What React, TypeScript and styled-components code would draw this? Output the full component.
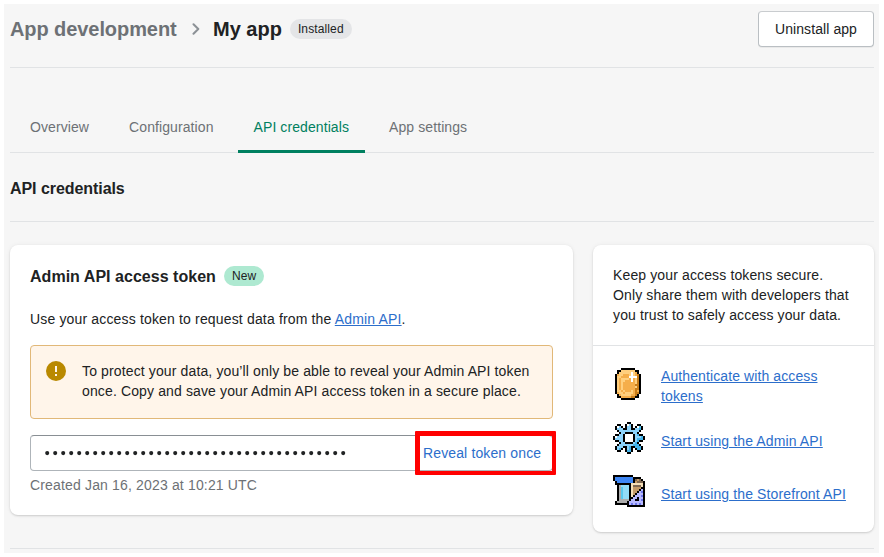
import React from 'react';
import styled, { createGlobalStyle } from 'styled-components';

const GlobalStyle = createGlobalStyle`
  *, *::before, *::after { box-sizing: border-box; }
  html, body { margin: 0; background: #fff; }
  body {
    font-family: "Liberation Sans", Arial, sans-serif;
    font-size: 14px;
    line-height: 20px;
    letter-spacing: 0.13px;
    color: #202223;
    overflow: hidden;
  }
  h1, h2, p { margin: 0; }
`;

const Page = styled.main`
  width: 875px;
  height: 549px;
  margin: 4px 5px 4px 4px;
  padding: 0 5px 0 6px;
  background: #f6f6f6;
  display: flex;
  flex-direction: column;
`;

const Header = styled.header`
  flex: none;
  height: 64px;
  border-bottom: 1px solid #e1e3e5;
  display: flex;
  justify-content: space-between;
  align-items: flex-start;
`;

const Breadcrumb = styled.h1`
  display: flex;
  align-items: center;
  margin-top: 11px;
  height: 28px;
  font-size: 20px;
  line-height: 28px;
  font-weight: 700;
  letter-spacing: 0;
  white-space: nowrap;
`;

const Parent = styled.span`
  color: #6d7175;
  width: 167px;
  letter-spacing: -0.08px;
`;

const Chevron = styled.svg`
  width: 8px;
  height: 12px;
  margin: 0 13px 0 15px;
`;

const Badge = styled.span<{ $tone: string }>`
  display: inline-flex;
  align-items: center;
  height: 20px;
  padding: 0 8px;
  border-radius: 10px;
  background: ${(p) => p.$tone};
  font-size: 12px;
  line-height: 16px;
  font-weight: 400;
  margin-left: 8px;
  letter-spacing: 0.12px;
`;

const Button = styled.button`
  width: 116px;
  height: 36px;
  margin-top: 7px;
  padding: 0;
  background: #fff;
  border: 1px solid #babfc3;
  border-top-color: #c9cccf;
  border-radius: 4px;
  box-shadow: 0 1px 0 rgba(0, 0, 0, 0.05);
  font: inherit;
  letter-spacing: 0.08px;
  color: #202223;
`;

const Tabs = styled.nav`
  flex: none;
  margin-top: 32px;
  height: 53px;
  padding-left: 4px;
  display: flex;
  letter-spacing: 0.09px;
  border-bottom: 1px solid #e1e3e5;
`;

const Tab = styled.a<{ $active?: boolean }>`
  height: 53px;
  padding: 17px 16px 0;
  margin-right: 8px;
  white-space: nowrap;
  color: ${(p) => (p.$active ? '#008060' : '#6d7175')};
  border-bottom: 3px solid ${(p) => (p.$active ? '#008060' : 'transparent')};
  border-radius: 2px 2px 0 0;
`;

const SectionTitle = styled.h2`
  flex: none;
  height: 69px;
  padding-top: 24px;
  font-size: 16px;
  line-height: 24px;
  letter-spacing: -0.06px;
  border-bottom: 1px solid #e1e3e5;
`;

const Columns = styled.div`
  flex: none;
  display: flex;
  align-items: flex-start;
  gap: 20px;
  height: 326px;
  padding-top: 23px;
`;

const Card = styled.section<{ $w: number; $h: number }>`
  width: ${(p) => p.$w}px;
  height: ${(p) => p.$h}px;
  background: #fff;
  border-radius: 8px;
  box-shadow: 0 0 5px rgba(23, 24, 24, 0.05), 0 1px 2px rgba(0, 0, 0, 0.15);
`;

const TokenCard = styled(Card)`
  padding: 19px 20px 0;
`;

const CardTitle = styled.h2`
  display: flex;
  align-items: center;
  height: 24px;
  font-size: 16px;
  line-height: 24px;
  letter-spacing: 0.03px;
`;

const TitleText = styled.span`
  padding-top: 2px;
`;

const Lead = styled.p`
  margin-top: 21px;
  letter-spacing: 0.16px;
`;

const Link = styled.a`
  color: #2c6ecb;
  text-decoration: underline;
`;

const Banner = styled.div`
  margin-top: 16px;
  height: 74px;
  padding: 15px 0 0 15px;
  display: flex;
  gap: 16px;
  align-items: flex-start;
  white-space: nowrap;
  background: #fff5ea;
  border: 1px solid #e1b878;
  border-radius: 4px;
`;

const WarningIcon = styled.svg`
  flex: none;
  width: 20px;
  height: 20px;
`;

const TokenField = styled.div`
  position: relative;
  margin-top: 16px;
  height: 36px;
  padding-left: 13px;
  display: flex;
  align-items: center;
  border: 1px solid #aeb4b9;
  border-top-color: #898f94;
  border-radius: 4px;
`;

const Dots = styled.svg`
  width: 306px;
  height: 6px;
  margin-top: -1px;
`;

const RevealHighlight = styled.div`
  position: absolute;
  left: 384px;
  top: -5px;
  width: 141px;
  height: 44px;
  padding-left: 3px;
  border: solid #ff0000;
  border-width: 5px 4px 4px 5px;
  border-radius: 1px;
  line-height: 35px;
  white-space: nowrap;
  color: #2c6ecb;
`;

const Caption = styled.p`
  margin-top: 4px;
  color: #6d7175;
  letter-spacing: 0.16px;
`;

const Notice = styled.p`
  height: 101px;
  padding: 20px 20px 0;
  border-bottom: 1px solid #e1e3e5;
  white-space: nowrap;
`;

const Sprite = styled.svg`
  flex: none;
  width: 32px;
  height: 32px;
  shape-rendering: crispEdges;
`;

const LinkRow = styled.div<{ $top: number; $drop?: number; $lift?: number }>`
  display: flex;
  align-items: center;
  gap: 16px;
  padding: 0 20px;
  margin-top: ${(p) => p.$top}px;
  min-height: 32px;

  ${Sprite} {
    margin-bottom: ${(p) => p.$lift ?? 0}px;
  }

  ${Link} {
    margin-top: ${(p) => p.$drop ?? 0}px;
    letter-spacing: ${(p) => (p.$lift ? '0.1px' : '0.12px')};
  }
`;

const BottomRule = styled.div`
  flex: none;
  height: 1px;
  background: #e1e3e5;
`;

/* Each character is one cell of a 16x16 sprite; "." is empty. */
const coin = [
  '....KKKKKKK.....',
  '..KKyyyyyyyKK...',
  '..KyyyyyywyoK...',
  '.KoyyoooywyodK..',
  '.KyyoooowwwwdK..',
  '.KyoyyyyowoydK..',
  '.KyoyyooowoydK..',
  '.KyoyooooooydK..',
  '.KyoyooooooddK..',
  '.KyoyooooooydK..',
  '.KyoyooooooddK..',
  '.KyyoyoooyodoK..',
  '.KoyyoyyyyoddK..',
  '..KoyyyyyoodK...',
  '..KKoooooddKK...',
  '....KKKKKKK.....',
];
const gear = [
  '.......KK.......',
  '..KK..KwlK..KK..',
  '.KwlK.KllK.KwcK.',
  '.KlllKKllKKllbK.',
  '..KllllllllllK..',
  '...KllKKKKllK...',
  '.KKllK....KlbKK.',
  'KwlllK....KlllbK',
  'KllllK....KlbbbK',
  '.KKllK....KlbKK.',
  '...KllKKKKlbK...',
  '..KlllllllbbbK..',
  '.KlllKKlbKKbbbK.',
  '.KlbK.KlbK.KbbK.',
  '..KK..KbbK..KK..',
  '.......KK.......',
];
const store = [
  'KKKKKKKKKK......',
  'KuuuuuuuuuKKKK..',
  'KuuuuuuuuuKnmnK.',
  '.KuuuuuuuuKmnnnK',
  '.KKKKKKKKttttttK',
  '..KgssssKtnnnntK',
  '..KgcsssKtmmmmKK',
  '..KgcsssKtmmmKvK',
  '..KgcsssKtmmKvpK',
  '..KgcsssKtmKvvvK',
  '..KgcsssKtKvvvpK',
  '..KgcsssKKvvKvvK',
  '..KgggggKvvKKvpK',
  '.KgggggKvvvvvvvK',
  '.KKKKKKKvpvpvpvK',
  '.......KKKKKKKKK',
];
const palette: Record<string, string> = {
  K: '#000000', o: '#f5ae4b', y: '#ffcf7e', d: '#c87d1a', w: '#ffffff',
  l: '#8cd3fb', b: '#43b3ea', u: '#3f87f5', c: '#58c9ef', s: '#92dcf8',
  g: '#adadad', t: '#f5dfb8', m: '#c59b68', n: '#806953', v: '#b8b9ff', p: '#6d76ec',
};

function PixelArt({ rows }: { rows: string[] }) {
  return (
    <Sprite viewBox="0 0 16 16" aria-hidden="true">
      {rows.flatMap((row, y) =>
        [...row].map((c, x) =>
          c === '.' ? null : <rect key={`${x}-${y}`} x={x} y={y} width="1" height="1" fill={palette[c]} />,
        ),
      )}
    </Sprite>
  );
}

export default function App() {
  return (
    <>
      <GlobalStyle />
      <Page>
        <Header>
          <Breadcrumb>
            <Parent>App development</Parent>
            <Chevron viewBox="0 0 8 12" fill="none" stroke="#8c9196" strokeWidth="2" strokeLinecap="round" strokeLinejoin="round">
              <path d="M1.5 1.2 6.3 6 1.5 10.8" />
            </Chevron>
            My app
            <Badge $tone="#e4e5e7">Installed</Badge>
          </Breadcrumb>
          <Button>Uninstall app</Button>
        </Header>
        <Tabs>
          <Tab>Overview</Tab>
          <Tab>Configuration</Tab>
          <Tab $active>API credentials</Tab>
          <Tab>App settings</Tab>
        </Tabs>
        <SectionTitle>API credentials</SectionTitle>
        <Columns>
          <TokenCard $w={563} $h={270}>
            <CardTitle>
              <TitleText>Admin API access token</TitleText>
              <Badge $tone="#aee9d1">New</Badge>
            </CardTitle>
            <Lead>
              Use your access token to request data from the <Link>Admin API</Link>.
            </Lead>
            <Banner>
              <WarningIcon viewBox="0 0 20 20">
                <circle cx="10" cy="10" r="10" fill="#b98900" />
                <path d="M9 5h2v6H9zM9 13h2v2H9z" fill="#fff5ea" />
              </WarningIcon>
              <p>
                To protect your data, you’ll only be able to reveal your Admin API token
                <br />
                once. Copy and save your Admin API access token in a secure place.
              </p>
            </Banner>
            <TokenField>
              <Dots viewBox="0 0 306 6" fill="#202223">
                {Array.from({ length: 38 }, (_, i) => (
                  <circle key={i} cx={3.2 + i * 8} cy="3.1" r="2.05" />
                ))}
              </Dots>
              <RevealHighlight>Reveal token once</RevealHighlight>
            </TokenField>
            <Caption>Created Jan 16, 2023 at 10:21 UTC</Caption>
          </TokenCard>
          <Card $w={281} $h={287}>
            <Notice>
              Keep your access tokens secure.
              <br />
              Only share them with developers that
              <br />
              you trust to safely access your data.
            </Notice>
            <LinkRow $top={20} $lift={4}>
              <PixelArt rows={coin} />
              <Link>Authenticate with access tokens</Link>
            </LinkRow>
            <LinkRow $top={16} $drop={6}>
              <PixelArt rows={gear} />
              <Link>Start using the Admin API</Link>
            </LinkRow>
            <LinkRow $top={21} $drop={6}>
              <PixelArt rows={store} />
              <Link>Start using the Storefront API</Link>
            </LinkRow>
          </Card>
        </Columns>
        <BottomRule />
      </Page>
    </>
  );
}
